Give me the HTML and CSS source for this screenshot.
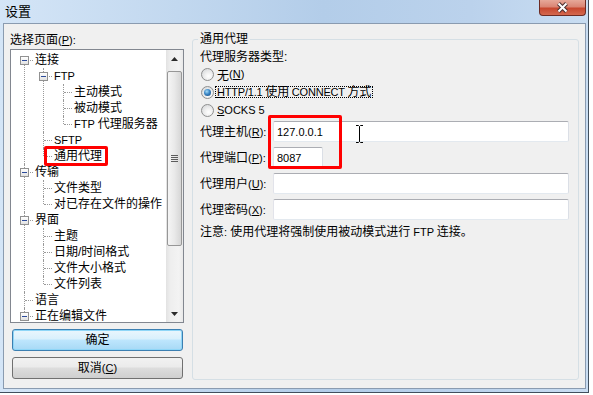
FILE: index.html
```html
<!DOCTYPE html>
<html lang="zh-CN">
<head>
    <meta charset="UTF-8">
    <meta name="viewport" content="width=device-width, initial-scale=1.0">
    <title>设置</title>
    <link rel="stylesheet" href="styles.css">
</head>
<body>
    <div class="window">
        <div class="titlebar">
            <span class="title">设置</span>
            <button class="close-btn" aria-label="关闭">
                <svg width="13" height="11" viewBox="0 0 13 11">
                    <path d="M2.5 1.5 L10.5 9.5 M10.5 1.5 L2.5 9.5" stroke="#4a3030" stroke-width="4"/>
                    <path d="M2.5 1.5 L10.5 9.5 M10.5 1.5 L2.5 9.5" stroke="#fff" stroke-width="2"/>
                </svg>
            </button>
        </div>

        <div class="client">
            <!-- Page list -->
            <div class="left-col">
                <div class="pick-label">选择页面<span class="en">(<u>P</u>):</span></div>
                <div class="tree">
                    <div class="tree-view">
                        <ul class="tree-list">
                            <li><div class="row"><span class="twisty"></span>连接</div>
                                <ul class="sub">
                                    <li><div class="row"><span class="twisty"></span><span class="en">FTP</span></div>
                                        <ul class="sub sub2">
                                            <li><div class="row">主动模式</div></li>
                                            <li><div class="row">被动模式</div></li>
                                            <li><div class="row"><span class="en">FTP </span>代理服务器</div></li>
                                        </ul>
                                    </li>
                                    <li><div class="row"><span class="en">SFTP</span></div></li>
                                    <li><div class="row">通用代理</div></li>
                                </ul>
                            </li>
                            <li><div class="row"><span class="twisty"></span>传输</div>
                                <ul class="sub">
                                    <li><div class="row">文件类型</div></li>
                                    <li><div class="row">对已存在文件的操作</div></li>
                                </ul>
                            </li>
                            <li><div class="row"><span class="twisty"></span>界面</div>
                                <ul class="sub">
                                    <li><div class="row">主题</div></li>
                                    <li><div class="row">日期/时间格式</div></li>
                                    <li><div class="row">文件大小格式</div></li>
                                    <li><div class="row">文件列表</div></li>
                                </ul>
                            </li>
                            <li><div class="row">语言</div></li>
                            <li><div class="row"><span class="twisty"></span>正在编辑文件</div></li>
                        </ul>
                    </div>
                    <div class="scrollbar">
                        <div class="sb-btn">
                            <svg width="7" height="4" viewBox="0 0 7 4"><path d="M0 4 L3.5 0 L7 4 Z" fill="#2b2b2b"/></svg>
                        </div>
                        <div class="sb-track">
                            <div class="sb-thumb"><span class="grip"></span></div>
                        </div>
                        <div class="sb-btn">
                            <svg width="7" height="4" viewBox="0 0 7 4"><path d="M0 0 L3.5 4 L7 0 Z" fill="#2b2b2b"/></svg>
                        </div>
                    </div>
                </div>
                <button class="btn btn-default">确定</button>
                <button class="btn">取消<span class="en">(<u>C</u>)</span></button>
            </div>

            <!-- Proxy settings -->
            <fieldset class="group">
                <legend>通用代理</legend>
                <div class="type-label">代理服务器类型:</div>
                <label class="radio"><span class="radio-dot"></span>无<span class="en">(<u>N</u>)</span></label>
                <label class="radio"><span class="radio-dot checked"></span><span class="focus"><span class="en"><u>H</u>TTP/1.1 </span>使用<span class="en"> CONNECT </span>方式</span></label>
                <label class="radio"><span class="radio-dot"></span><span class="en"><u>S</u>OCKS 5</span></label>

                <div class="form">
                    <label>代理主机<span class="en">(<u>R</u>):</span></label>
                    <input type="text" class="field" value="127.0.0.1">
                    <label>代理端口<span class="en">(<u>P</u>):</span></label>
                    <input type="text" class="field short" value="8087">
                    <label>代理用户<span class="en">(<u>U</u>):</span></label>
                    <input type="text" class="field" value="">
                    <label>代理密码<span class="en">(<u>X</u>):</span></label>
                    <input type="password" class="field" value="">
                </div>
                <p class="note">注意<span class="en">: </span>使用代理将强制使用被动模式进行<span class="en"> FTP </span>连接。</p>
            </fieldset>
        </div>

        <!-- annotations drawn over the dialog -->
        <span class="mark mark-tree"></span>
        <span class="mark mark-fields"></span>
        <svg class="ibeam" width="9" height="18" viewBox="0 0 9 18">
            <path d="M1 0.5 H3.5 L4.5 1.5 L5.5 0.5 H8 M4.5 1.5 V16.5 M1 17.5 H3.5 L4.5 16.5 L5.5 17.5 H8" stroke="#000" stroke-width="1" fill="none"/>
        </svg>
    </div>
</body>
</html>
```

FILE: styles.css
```css
/* Basic Styling */
* {
    box-sizing: border-box;
}

body {
    margin: 0;
    background-color: #fff;
    font-family: "Liberation Sans", "Noto Sans CJK SC", sans-serif;
    font-size: 12px;
    color: #000;
}

.en {
    font-size: 11px;
}

/* Window frame */
.window {
    position: relative;
    width: 589px;
    height: 393px;
    display: flex;
    flex-direction: column;
    padding: 0 2px 3px 3px;
    border-right: 1px solid #414f5e;
    border-bottom: 1px solid #414f5e;
    background: linear-gradient(to right, #d4e5f7 0%, #c2d8ef 30%, #b3cde9 55%, #bbd2ec 80%, #c9ddf2 100%);
}

.titlebar {
    height: 23px;
    flex-shrink: 0;
    display: flex;
    justify-content: space-between;
    align-items: flex-start;
}

.title {
    margin: 4px 0 0 2px;
    line-height: 15px;
    font-size: 13px;
}

.close-btn {
    width: 47px;
    height: 16px;
    padding: 0;
    border: 1px solid #6d2b23;
    border-top: none;
    border-radius: 0 0 4px 4px;
    background: linear-gradient(#e6a899 0%, #da8574 45%, #c7472f 55%, #d4694f 100%);
    display: flex;
    align-items: center;
    justify-content: center;
}

.client {
    flex: 1;
    display: flex;
    border: 1px solid #8a9bb0;
    background-color: #f0f0f0;
}

/* Left column */
.left-col {
    width: 180px;
    flex-shrink: 0;
}

.pick-label {
    padding: 8px 0 0 6px;
    line-height: 16px;
    height: 24px;
}

.tree {
    margin: 1px 0 0 6px;
    width: 174px;
    height: 274px;
    border: 1px solid #828790;
    background-color: #fff;
    display: flex;
}

.tree-view {
    flex: 1;
    overflow: hidden;
    padding-top: 2px;
}

.tree-view ul {
    list-style: none;
    margin: 0;
    padding: 0;
}

.tree-view .sub {
    padding-left: 19px;
}

.tree-view .sub2 {
    padding-left: 20px;
}

.tree-view li {
    position: relative;
}

/* dotted connector lines */
.tree-view li::before {
    content: "";
    position: absolute;
    left: 13px;
    top: 0;
    bottom: 0;
    border-left: 1px dotted #9a9a9a;
}

.tree-view li:last-child::before {
    bottom: auto;
    height: 8px;
}

.tree-list > li:first-child::before {
    top: 8px;
}

.row {
    position: relative;
    height: 16px;
    line-height: 16px;
    padding-left: 24px;
    white-space: nowrap;
}

.row::before {
    content: "";
    position: absolute;
    left: 14px;
    top: 8px;
    width: 8px;
    border-top: 1px dotted #9a9a9a;
}

.twisty {
    position: absolute;
    left: 9px;
    top: 4px;
    width: 9px;
    height: 9px;
    z-index: 1;
    border: 1px solid #919191;
    background: linear-gradient(#fff, #e2e2e2);
}

.twisty::after {
    content: "";
    position: absolute;
    left: 1px;
    top: 3px;
    width: 5px;
    height: 1px;
    background-color: #2c4b9a;
}

/* Scrollbar */
.scrollbar {
    width: 17px;
    flex-shrink: 0;
    display: flex;
    flex-direction: column;
    background: linear-gradient(to right, #e2e2e2, #eeeeee 25%, #f3f3f3 75%, #e9e9e9);
}

.sb-btn {
    height: 17px;
    display: flex;
    align-items: center;
    justify-content: center;
}

.sb-track {
    flex: 1;
    padding-top: 4px;
}

.sb-thumb {
    margin-left: 1px;
    width: 15px;
    height: 175px;
    border: 1px solid #979797;
    border-radius: 2px;
    background: linear-gradient(to right, #f5f5f5, #e9e9e9 50%, #d6d6d6);
    display: flex;
    align-items: center;
    justify-content: center;
}

.grip {
    width: 7px;
    height: 7px;
    background: repeating-linear-gradient(#5c5c5c 0 1px, transparent 1px 2px);
}

/* Buttons */
.btn {
    display: flex;
    align-items: center;
    justify-content: center;
    width: 171px;
    height: 22px;
    margin: 6px 0 0 8px;
    padding: 0;
    border: 1px solid #707070;
    border-radius: 3px;
    background: linear-gradient(#f2f2f2 0%, #ebebeb 45%, #dddddd 50%, #cfcfcf 100%);
    font-family: inherit;
    font-size: 12px;
    line-height: 16px;
    color: #000;
}

.btn-default {
    border-color: #3c7fb1;
    box-shadow: inset 0 0 0 1px #8fd6f7;
    background: linear-gradient(#eaf6fd 0%, #d9f0fc 45%, #bee6fd 50%, #a7d9f5 100%);
}

/* Proxy group box */
.group {
    margin: 7px 0 0 8px;
    width: 387px;
    height: 349px;
    padding: 2px 9px 0 7px;
    border: 1px solid #d5dfe5;
    border-radius: 3px;
    min-inline-size: 0;
}

.group legend {
    margin-left: -2px;
    padding: 0 2px;
    line-height: 16px;
}

.type-label {
    height: 16px;
    line-height: 16px;
}

.radio {
    display: flex;
    align-items: center;
    height: 18px;
}

.radio-dot {
    position: relative;
    width: 13px;
    height: 13px;
    margin: 0 3px 0 1px;
    border-radius: 50%;
    border: 1px solid #8e8f8f;
    background: radial-gradient(circle at 60% 65%, #ffffff 0, #f1f1f1 35%, #cfd1d4 100%);
}

.radio-dot.checked::after {
    content: "";
    position: absolute;
    left: 2px;
    top: 2px;
    width: 7px;
    height: 7px;
    border-radius: 50%;
    background: radial-gradient(circle at 40% 35%, #a6dcf7 0, #3b87c7 45%, #113f74 100%);
}

.focus {
    display: inline-block;
    height: 12px;
    line-height: 10px;
    margin-left: -2px;
    padding: 0 1px;
    border: 1px dotted #000;
    letter-spacing: -0.2px;
}

.form {
    margin-top: 2px;
    display: grid;
    grid-template-columns: 73px 1fr;
    grid-auto-rows: 21px;
    row-gap: 5px;
    align-items: center;
}

.form label {
    line-height: 16px;
    white-space: nowrap;
}

.field {
    width: 100%;
    height: 21px;
    padding: 0 3px;
    border: 1px solid;
    border-color: #abadb3 #dbdfe6 #e3e9ef #e2e3ea;
    border-radius: 2px;
    background-color: #fff;
    font-family: "Liberation Sans", sans-serif;
    font-size: 11px;
    color: #000;
    outline: none;
}

.field.short {
    width: 50px;
}

.note {
    margin: 4px 0 0;
    line-height: 16px;
    white-space: nowrap;
}

/* Red annotation boxes and mouse cursor */
.mark {
    position: absolute;
    border: 3px solid #ff0000;
    border-radius: 2px;
}

.mark-tree {
    left: 44px;
    top: 146px;
    width: 64px;
    height: 20px;
}

.mark-fields {
    left: 268px;
    top: 115px;
    width: 74px;
    height: 54px;
}

.ibeam {
    position: absolute;
    left: 355px;
    top: 125px;
}
```
